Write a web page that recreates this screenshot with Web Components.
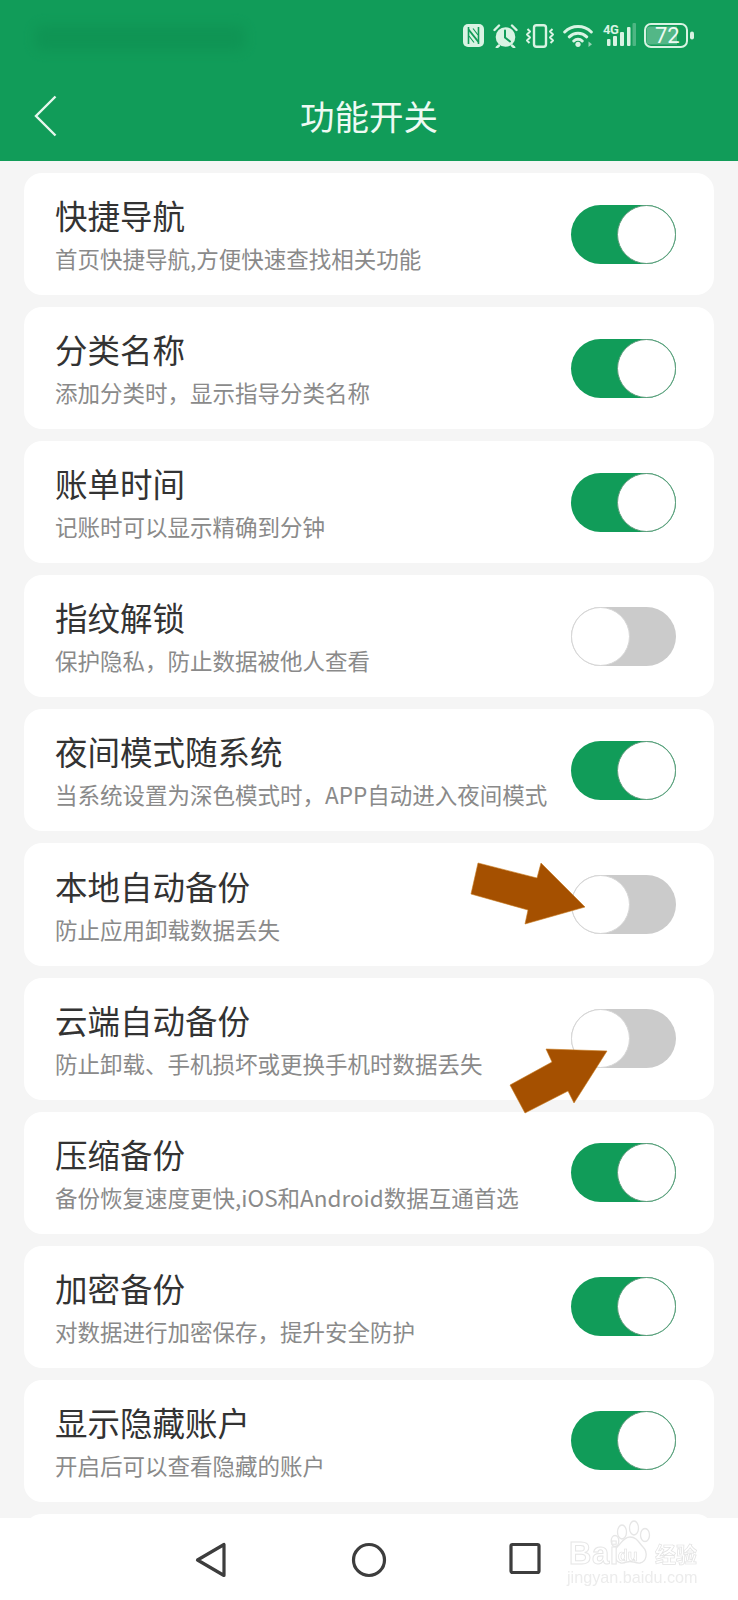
<!DOCTYPE html>
<html lang="zh">
<head>
<meta charset="utf-8">
<title>功能开关</title>
<style>
html,body{margin:0;padding:0;background:#f5f5f5}
body{font-family:"Noto Sans CJK SC","Noto Sans",sans-serif;width:738px;height:1600px;overflow:hidden}
</style>
</head>
<body>
<app-screen>
  <app-header slot="header" title="功能开关"></app-header>
  <setting-row title="快捷导航" sub="首页快捷导航,方便快速查找相关功能" on></setting-row>
  <setting-row title="分类名称" sub="添加分类时，显示指导分类名称" on></setting-row>
  <setting-row title="账单时间" sub="记账时可以显示精确到分钟" on></setting-row>
  <setting-row title="指纹解锁" sub="保护隐私，防止数据被他人查看"></setting-row>
  <setting-row title="夜间模式随系统" sub="当系统设置为深色模式时，APP自动进入夜间模式" on></setting-row>
  <setting-row title="本地自动备份" sub="防止应用卸载数据丢失"></setting-row>
  <setting-row title="云端自动备份" sub="防止卸载、手机损坏或更换手机时数据丢失"></setting-row>
  <setting-row title="压缩备份" sub="备份恢复速度更快,iOS和Android数据互通首选" on></setting-row>
  <setting-row title="加密备份" sub="对数据进行加密保存，提升安全防护" on></setting-row>
  <setting-row title="显示隐藏账户" sub="开启后可以查看隐藏的账户" on></setting-row>
  <setting-row></setting-row>
  <nav-bar slot="footer"></nav-bar>
  <annotation-arrows slot="overlay"></annotation-arrows>
</app-screen>
<script>
function define(name, html, observed){
  customElements.define(name, class extends HTMLElement{
    constructor(){super();this.attachShadow({mode:"open"}).innerHTML=html;}
    connectedCallback(){ if(observed) observed(this,this.shadowRoot); }
  });
}
const GREEN="#119c59", LIGHT="#d9f3e3";

define("app-screen",`<style>
:host{display:flex;flex-direction:column;position:relative;width:738px;height:1600px;overflow:hidden;background:#f5f5f5}
.list{flex:1;min-height:0;overflow:hidden;display:flex;flex-direction:column;gap:12px;padding:12px 24px 0}
</style>
<slot name="header"></slot>
<div class="list"><slot></slot></div>
<slot name="footer"></slot>
<slot name="overlay"></slot>`);

define("status-icons",`<style>
:host{display:flex;align-items:center;height:25px;color:${LIGHT}}
svg{display:block;flex:none}
.net{position:relative;flex:none;width:33px;height:25px;margin-left:10px}
.net span{position:absolute;left:0;top:0;font:700 13px/13px "Roboto",sans-serif;letter-spacing:-.4px;color:${LIGHT}}
.net svg{position:absolute;left:0;top:0}
.bat{position:relative;flex:none;width:50px;height:25px;margin-left:8px}
.bat span{position:absolute;left:11px;width:22px;top:0;text-align:center;font:400 22px/25px "Roboto",sans-serif;color:#eefaf3}
.bat svg{position:absolute;left:0;top:0}
</style>
<svg width="21" height="23" viewBox="0 0 21 23" fill="none"><rect x="0" y="0" width="21" height="23" rx="5" fill="${LIGHT}"/><path d="M5.500 3v17M15.500 3v17" stroke="${GREEN}" stroke-width="1.600"/><path d="M5.500 5.500 15.500 18" stroke="${GREEN}" stroke-width="2"/><path d="M10 4.500 15 11M6 12l5 6.500" stroke="${GREEN}" stroke-width="1.200"/></svg>
<svg style="margin-left:9px" width="25" height="24" viewBox="0 0 25 24" fill="none"><circle cx="12.500" cy="13" r="9.800" fill="${LIGHT}"/><path d="M12 6.500V13.500l5 4" stroke="${GREEN}" stroke-width="2" stroke-linecap="round"/><path d="M1.500 6 6 1.500M23.500 6 19 1.500M6 21.500l-2.200 2M19 21.500l2.200 2" stroke="${LIGHT}" stroke-width="2.400" stroke-linecap="round"/></svg>
<svg style="margin-left:7px" width="30" height="24" viewBox="0 0 30 24" fill="none" stroke="${LIGHT}"><rect x="9" y="1.200" width="12" height="21.600" rx="2.500" stroke-width="2.400"/><path d="M2.500 5l2.500 2.500L2 10.500l3 3L2 16.500l2.500 2.500M27.500 5 25 7.500l3 3-3 3 3 3-2.500 2.500" stroke-width="2" stroke-linejoin="round"/></svg>
<svg style="margin-left:8px" width="30" height="23" viewBox="0 0 30 23" fill="none" stroke="${LIGHT}" stroke-width="3" stroke-linecap="round"><path d="M1.700 8a19 19 0 0 1 26.600 0M6.300 12.800a12.500 12.500 0 0 1 17.400 0M10.800 17a6 6 0 0 1 8.400 0"/><circle cx="15" cy="20.300" r="2.600" fill="${LIGHT}" stroke="none"/><path d="M25.500 17.500l3.500 2.700-3.500 2.700z" fill="${LIGHT}" stroke="none" opacity=".65"/></svg>
<div class="net"><span>4G</span><svg width="33" height="25" viewBox="0 0 33 25"><g fill="${LIGHT}"><rect x="4" y="16" width="3.500" height="7" rx="1"/><rect x="10" y="13" width="4" height="10" rx="1"/><rect x="17" y="9" width="4" height="14" rx="1"/><rect x="24" y="4" width="3.500" height="19" rx="1"/><rect x="29.500" y="0" width="3.500" height="23" rx="1" opacity=".3"/></g></svg></div>
<div class="bat"><svg width="50" height="25" viewBox="0 0 50 25" fill="none"><rect x="1" y="1" width="42" height="23" rx="6" stroke="${LIGHT}" stroke-width="2"/><path d="M6 3.500h27v18H6a3.500 3.500 0 0 1-3.500-3.500V7A3.500 3.500 0 0 1 6 3.500z" fill="#fff" opacity=".28"/><rect x="46" y="8.500" width="4" height="8" rx="2" fill="${LIGHT}"/></svg><span>72</span></div>`);

define("app-header",`<style>
:host{display:block;flex:none;background:${GREEN};height:161px;color:#eefaf3}
.status{height:72px;box-sizing:border-box;padding:23px 44px 0 35px;display:flex;justify-content:space-between;align-items:flex-start}
.blur{width:210px;height:26px;margin-top:2px;background:#0d8a4e;opacity:.4;filter:blur(6px);border-radius:8px}
.bar{height:89px;box-sizing:border-box;padding-bottom:4px;position:relative;display:flex;align-items:center;justify-content:center}
.title{font-size:34.5px;line-height:48px;font-weight:400}
svg{position:absolute;left:34px;top:23px}
</style>
<div class="status"><div class="blur"></div><status-icons></status-icons></div>
<div class="bar"><svg width="23" height="42" viewBox="0 0 23 42" fill="none"><path d="M21.500 1.500 2 21l19.500 19.500" stroke="#e6f7ed" stroke-width="2.400"/></svg><div class="title" id="t"></div></div>`,
(el,root)=>{root.getElementById("t").textContent=el.getAttribute("title");});

define("toggle-switch",`<style>
:host{display:block;flex:none;width:105px;height:59px;position:relative;border-radius:30px;background:#cbcbcb;box-sizing:border-box}
:host([on]){background:${GREEN}}
.knob{position:absolute;top:0;left:0;width:59px;height:59px;box-sizing:border-box;border-radius:50%;background:#fff;border:1px solid #d6d6d6}
:host([on]) .knob{left:auto;right:0;border-color:#5f9c7c}
</style><div class="knob"></div>`);

define("setting-row",`<style>
:host{display:flex;flex:none;align-items:center;justify-content:space-between;height:122.1px;box-sizing:border-box;background:#fff;border-radius:18px;padding:0 38px 0 31px}
.t{font-size:32.5px;line-height:44px;color:#333;margin-top:-2px;white-space:nowrap}
.s{font-size:22.5px;line-height:30px;color:#8a8a8a;margin-top:6px;white-space:nowrap}
</style><div><div class="t" id="t"></div><div class="s" id="s"></div></div><span id="h"></span>`,
(el,root)=>{
  if(!el.hasAttribute("title")) {root.getElementById("h").remove();return;}
  root.getElementById("t").textContent=el.getAttribute("title");
  root.getElementById("s").textContent=el.getAttribute("sub");
  const t=document.createElement("toggle-switch");
  if(el.hasAttribute("on")) t.setAttribute("on","");
  root.getElementById("h").replaceWith(t);
  el.removeAttribute("title");
});

define("baidu-mark",`<style>
:host{display:block;position:absolute;left:567px;top:2px;width:136px;height:66px;filter:blur(.5px)}
svg{position:absolute;left:43px;top:0}
.b,.d,.j,.c{position:absolute;white-space:nowrap}
.b{left:2px;top:19px;font:700 31px/30px "Liberation Sans",sans-serif;color:#fff;-webkit-text-stroke:1px #e6e6e6;letter-spacing:.5px}
.d{left:51px;top:27px;font:700 16px/17px "Liberation Sans",sans-serif;color:#fff;-webkit-text-stroke:.6px #dedede}
.c{left:88px;top:20px;font:700 21px/26px "Noto Sans CJK SC",sans-serif;color:#fff;-webkit-text-stroke:.7px #e2e2e2}
.j{left:0;top:49px;font:400 16.200px/17px "Liberation Sans",sans-serif;color:#ececec}
</style>
<svg width="42" height="48" viewBox="0 0 42 48" fill="none" stroke="#e6e6e6" stroke-width="1.300"><ellipse cx="12" cy="12" rx="4.500" ry="7"/><ellipse cx="24" cy="8" rx="4.500" ry="7"/><ellipse cx="35" cy="15" rx="4.500" ry="6.500"/><ellipse cx="5" cy="21" rx="3.800" ry="5.500"/><path d="M20 17c-6 0-8 5-12 9-5 5-5 15 3 17 4 .5 6-1.500 9-1.500s6 2 10 1.500c7-1.500 8-11 3-16-4-4-6-10-13-10z"/></svg>
<span class="b">Bai</span><span class="d">du</span><span class="c">经验</span><span class="j">jingyan.baidu.com</span>`);

define("nav-bar",`<style>
:host{display:block;flex:none;height:82px;background:#fff;position:relative;z-index:1}
.row{display:flex;height:100%;box-sizing:border-box;padding:24px 0 0 195px;align-items:flex-start}
svg{display:block;flex:none}
</style>
<div class="row">
<svg width="32" height="36" viewBox="0 0 32 36" fill="none" stroke="#3d3d3d" stroke-width="3.200" stroke-linejoin="round"><path d="M29 2.500V33.500L2.500 18z"/></svg>
<svg style="margin-left:124px" width="36" height="36" viewBox="0 0 36 36" fill="none" stroke="#3d3d3d" stroke-width="3.200"><circle cx="18" cy="18" r="15.500"/></svg>
<svg style="margin-left:122px" width="32" height="33" viewBox="0 0 32 33" fill="none" stroke="#3d3d3d" stroke-width="3.200" stroke-linejoin="round"><rect x="2" y="2.500" width="28" height="28" rx="1.500"/></svg>
</div>
<baidu-mark></baidu-mark>`);

define("annotation-arrows",`<style>
:host{display:block;position:absolute;left:0;top:0;width:738px;height:1600px;pointer-events:none}
svg{position:absolute;left:0;top:0}
</style>
<svg width="738" height="1600" viewBox="0 0 738 1600"><g fill="#a55000" stroke="#c77a1e" stroke-width=".6">
<polygon points="478,863 537,878 541,863 585,907 525,924 528,910 471,894"/>
<polygon points="546,1049 607,1051 574,1103 568,1091 525,1113 510,1085 552,1062"/>
</g></svg>`);
</script>
</body>
</html>
